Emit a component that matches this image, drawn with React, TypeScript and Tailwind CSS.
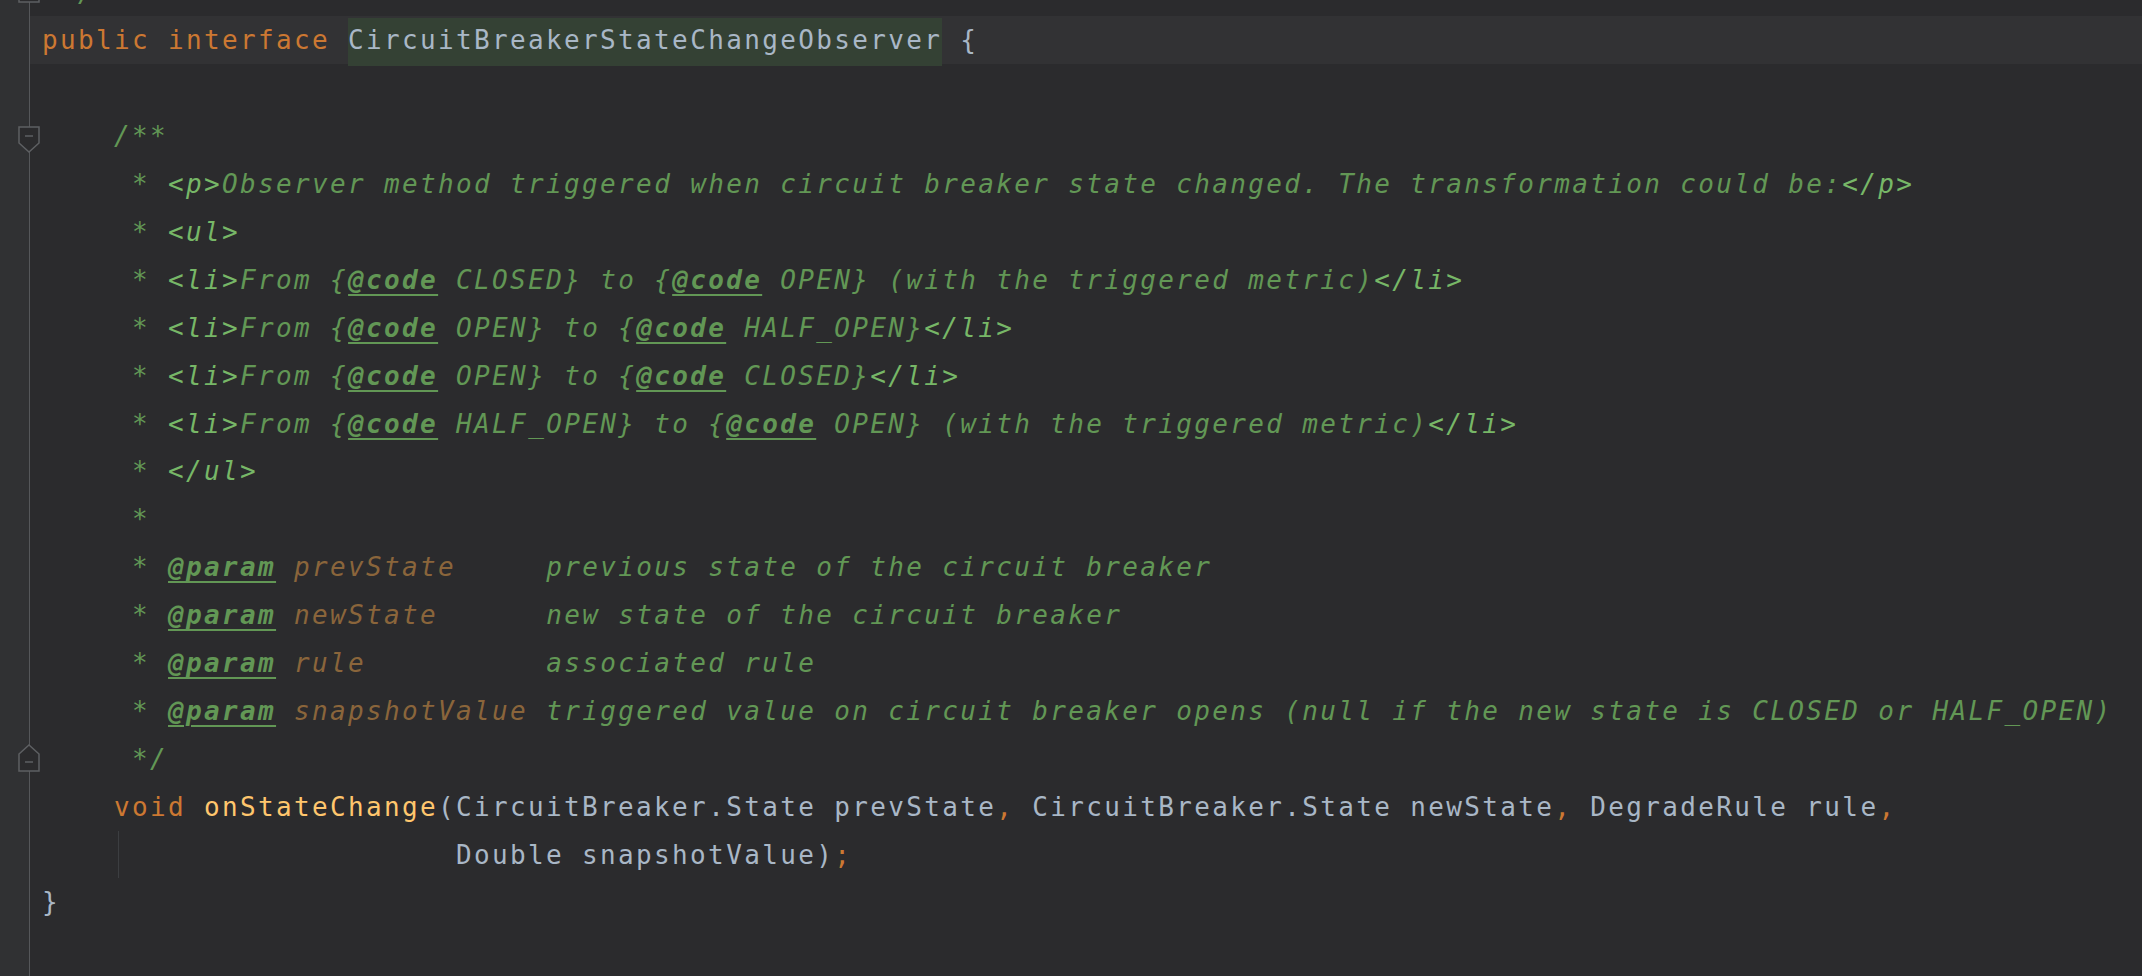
import React from 'react';

type Tok = [string, string];

const styles: Record<string, string> = {
  k: 'text-[#cc7832]',
  t: 'text-[#a9b7c6]',
  h: 'text-[#a9b7c6] bg-[#344134] inline-block h-[47.9px]',
  c: 'text-[#629755] italic',
  m: 'text-[#77b767] italic',
  a: 'text-[#629755] italic font-bold underline decoration-2 underline-offset-[5px]',
  p: 'text-[#8a653b] italic',
  f: 'text-[#ffc66d]',
};

const lines: Tok[][] = [
  [['c', ' */']],
  [['k', 'public interface '], ['h', 'CircuitBreakerStateChangeObserver'], ['t', ' {']],
  [],
  [['c', '    /**']],
  [['c', '     * '], ['m', '<p>'], ['c', 'Observer method triggered when circuit breaker state changed. The transformation could be:'], ['m', '</p>']],
  [['c', '     * '], ['m', '<ul>']],
  [['c', '     * '], ['m', '<li>'], ['c', 'From {'], ['a', '@code'], ['c', ' CLOSED} to {'], ['a', '@code'], ['c', ' OPEN} (with the triggered metric)'], ['m', '</li>']],
  [['c', '     * '], ['m', '<li>'], ['c', 'From {'], ['a', '@code'], ['c', ' OPEN} to {'], ['a', '@code'], ['c', ' HALF_OPEN}'], ['m', '</li>']],
  [['c', '     * '], ['m', '<li>'], ['c', 'From {'], ['a', '@code'], ['c', ' OPEN} to {'], ['a', '@code'], ['c', ' CLOSED}'], ['m', '</li>']],
  [['c', '     * '], ['m', '<li>'], ['c', 'From {'], ['a', '@code'], ['c', ' HALF_OPEN} to {'], ['a', '@code'], ['c', ' OPEN} (with the triggered metric)'], ['m', '</li>']],
  [['c', '     * '], ['m', '</ul>']],
  [['c', '     *']],
  [['c', '     * '], ['a', '@param'], ['c', ' '], ['p', 'prevState'], ['c', '     previous state of the circuit breaker']],
  [['c', '     * '], ['a', '@param'], ['c', ' '], ['p', 'newState'], ['c', '      new state of the circuit breaker']],
  [['c', '     * '], ['a', '@param'], ['c', ' '], ['p', 'rule'], ['c', '          associated rule']],
  [['c', '     * '], ['a', '@param'], ['c', ' '], ['p', 'snapshotValue'], ['c', ' triggered value on circuit breaker opens (null if the new state is CLOSED or HALF_OPEN)']],
  [['c', '     */']],
  [['k', '    void '], ['f', 'onStateChange'], ['t', '(CircuitBreaker.State prevState'], ['k', ', '], ['t', 'CircuitBreaker.State newState'], ['k', ', '], ['t', 'DegradeRule rule'], ['k', ',']],
  [['t', '                       Double snapshotValue)'], ['k', ';']],
  [['t', '}']],
  [],
  [],
];

const FoldStart = ({ top }: { top: number }) => (
  <svg className="absolute left-[18px] z-10" style={{ top }} width="22" height="28" viewBox="0 0 22 28">
    <path d="M1 1 H21 V17 L11 26 L1 17 Z" fill="#2b2b2d" stroke="#5e6063" strokeWidth="1.5" />
    <path d="M7 10 H15" stroke="#5e6063" strokeWidth="1.5" />
  </svg>
);

const FoldEnd = ({ top }: { top: number }) => (
  <svg className="absolute left-[18px] z-10" style={{ top }} width="22" height="28" viewBox="0 0 22 28">
    <path d="M1 27 H21 V10 L11 1 L1 10 Z" fill="#2b2b2d" stroke="#5e6063" strokeWidth="1.5" />
    <path d="M7 18 H15" stroke="#5e6063" strokeWidth="1.5" />
  </svg>
);

const App: React.FC = () => {
  return (
    <div className="flex h-[976px] w-full overflow-hidden bg-[#2b2b2d] font-['DejaVu_Sans_Mono',monospace] text-[26px] tracking-[2.35px]">
      <div className="relative w-[30px] shrink-0 border-r-[1.5px] border-[#55575a] bg-[#303133]">
        <FoldEnd top={-25} />
        <FoldStart top={126} />
        <FoldEnd top={744} />
      </div>
      <div className="mt-[-31.5px] flex-1">
        {lines.map((toks, i) => (
          <div
            key={i}
            className={
              i === 1
                ? 'relative h-[47.9px] whitespace-pre bg-[#323234] pl-[12px] pt-[2px] leading-[45.9px]'
                : 'relative h-[47.9px] whitespace-pre pl-[12px] pt-[2px] leading-[45.9px]'
            }
          >
            {i === 18 && <span className="absolute top-0 bottom-0 left-[88px] w-px bg-[#3c3e41]" />}
            {toks.map(([type, text], j) => (
              <span key={j} className={styles[type]}>
                {text}
              </span>
            ))}
          </div>
        ))}
      </div>
    </div>
  );
};

export default App;
